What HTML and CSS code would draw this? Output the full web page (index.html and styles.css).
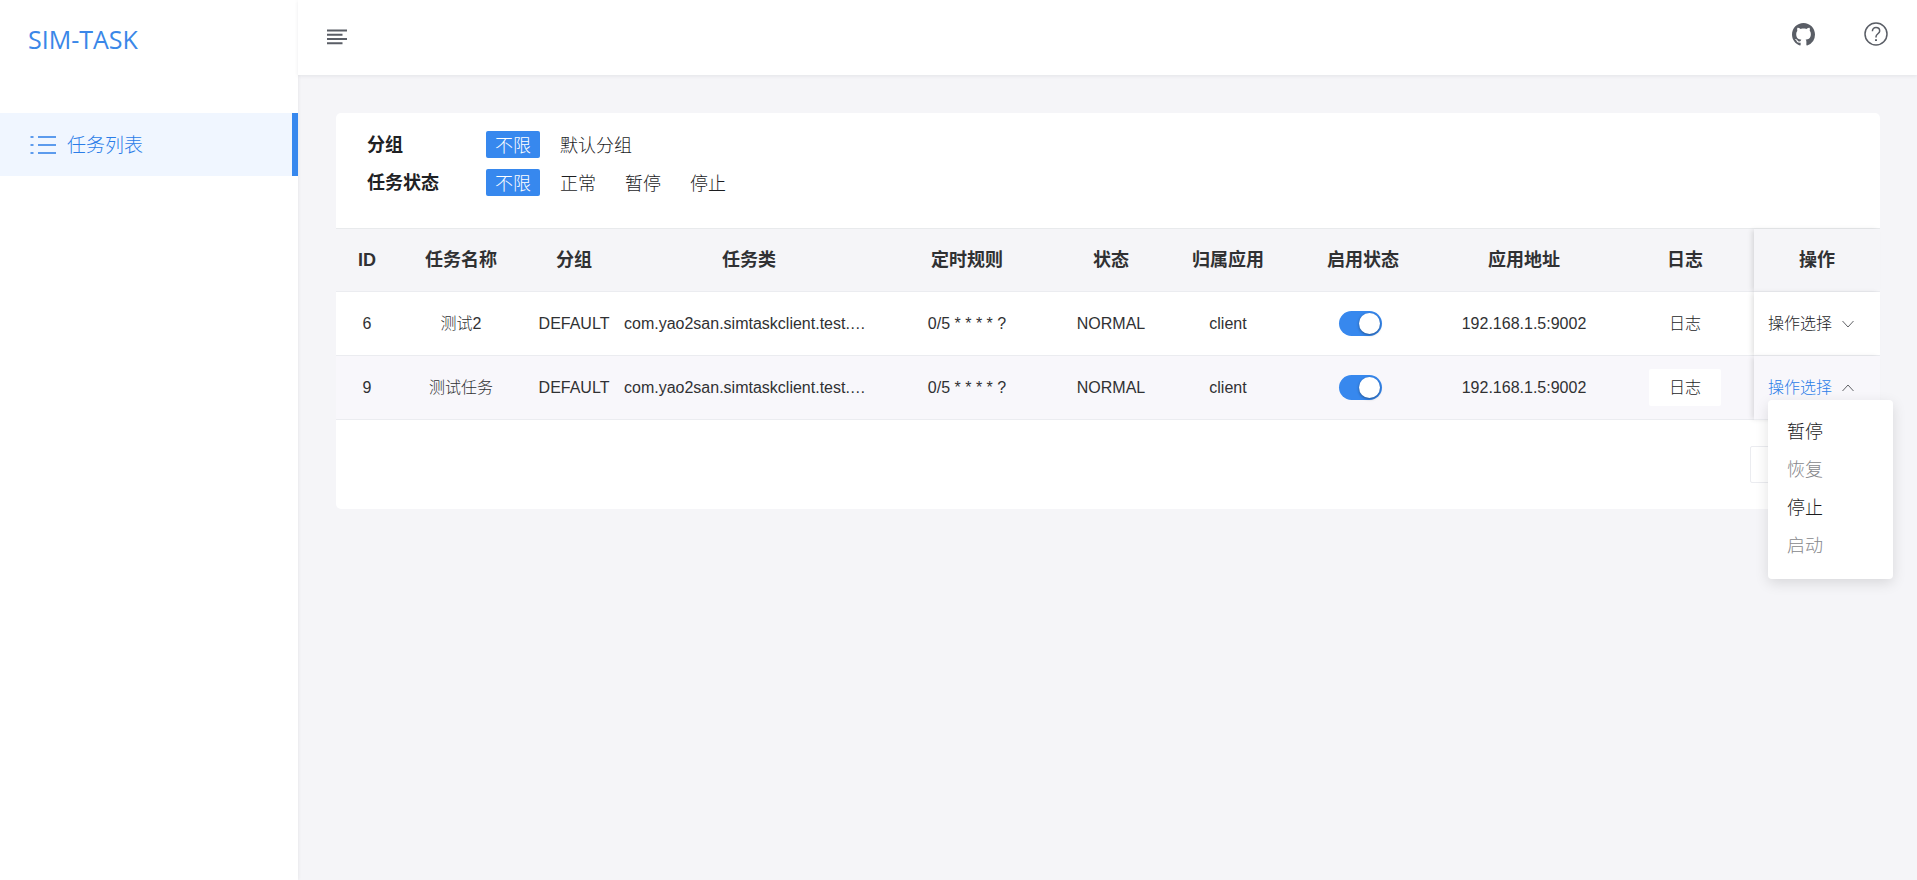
FILE: index.html
```html
<!DOCTYPE html>
<html lang="zh-CN">
<head>
<meta charset="utf-8">
<title>SIM-TASK</title>
<link rel="stylesheet" href="styles.css">
</head>
<body>
<div class="layout">
  <aside class="sidebar">
    <div class="logo">SIM-TASK</div>
    <nav class="menu">
      <a class="menu-item" href="#tasks">
        <svg class="menu-icon" viewBox="0 0 26 18" aria-hidden="true"><path d="M0.500 1H3.500M8 1H26M0.500 9H3.500M8 9H26M0.500 17H3.500M8 17H26"/></svg>
        <span>任务列表</span>
      </a>
    </nav>
  </aside>
  <div class="main">
    <header class="topbar">
      <button class="icon-button" type="button" aria-label="收起菜单">
        <svg class="fold-icon" viewBox="0 0 22 16" aria-hidden="true"><path d="M1 1.500H21M1 5.800H16.500M1 10H21M1 14.300H16.500"/></svg>
      </button>
      <div class="topbar-links">
        <a class="icon-button" href="#github" aria-label="GitHub">
          <svg class="github-icon" viewBox="0 0 16 16" aria-hidden="true"><path d="M8 0C3.580 0 0 3.580 0 8c0 3.540 2.290 6.530 5.470 7.590.4.070.55-.17.55-.38 0-.19-.01-.82-.01-1.490-2.010.37-2.530-.49-2.690-.94-.09-.23-.48-.94-.82-1.130-.28-.15-.68-.52-.01-.53.63-.01 1.080.58 1.230.82.72 1.210 1.870.87 2.330.66.07-.52.28-.87.51-1.070-1.780-.2-3.640-.89-3.640-3.950 0-.87.31-1.590.82-2.150-.08-.2-.36-1.020.08-2.120 0 0 .67-.21 2.200.82.64-.18 1.320-.27 2-.27s1.360.09 2 .27c1.530-1.040 2.200-.82 2.200-.82.44 1.100.16 1.920.08 2.120.51.56.82 1.270.82 2.150 0 3.070-1.870 3.750-3.650 3.950.29.25.54.73.54 1.480 0 1.070-.01 1.930-.01 2.200 0 .21.15.46.55.38A8.010 8.010 0 0 0 16 8c0-4.420-3.580-8-8-8z"/></svg>
        </a>
        <a class="icon-button" href="#help" aria-label="帮助">
          <svg class="help-icon" viewBox="0 0 24 24" aria-hidden="true"><circle cx="12" cy="12" r="11"/><path d="M8.400 9.200C8.400 7 9.900 5.600 12 5.600s3.700 1.400 3.700 3.400c0 2.600-3.700 2.900-3.700 5.700v.7"/><path class="dot" d="M12 17.300v1.600"/></svg>
        </a>
      </div>
    </header>
    <main class="content">
      <section class="card">
        <div class="filters">
          <div class="filter-row">
            <span class="filter-label">分组</span>
            <button class="pill pill-active" type="button">不限</button>
            <button class="pill" type="button">默认分组</button>
          </div>
          <div class="filter-row">
            <span class="filter-label">任务状态</span>
            <button class="pill pill-active" type="button">不限</button>
            <button class="pill" type="button">正常</button>
            <button class="pill" type="button">暂停</button>
            <button class="pill" type="button">停止</button>
          </div>
        </div>
        <table class="tasks">
          <colgroup>
            <col class="c-id"><col class="c-name"><col class="c-group"><col class="c-class"><col class="c-cron"><col class="c-status"><col class="c-app"><col class="c-enable"><col class="c-addr"><col class="c-log"><col class="c-op">
          </colgroup>
          <thead>
            <tr><th>ID</th><th>任务名称</th><th>分组</th><th>任务类</th><th>定时规则</th><th>状态</th><th>归属应用</th><th>启用状态</th><th>应用地址</th><th>日志</th><th class="fixed">操作</th></tr>
          </thead>
          <tbody>
            <tr>
              <td>6</td><td>测试2</td><td>DEFAULT</td><td class="clip">com.yao2san.simtaskclient.test.…</td><td>0/5 * * * * ?</td><td>NORMAL</td><td>client</td>
              <td class="switch-cell"><input class="switch" type="checkbox" aria-label="启用测试2" checked></td>
              <td>192.168.1.5:9002</td>
              <td><button class="log" type="button">日志</button></td>
              <td class="fixed"><div class="dropdown"><button class="trigger" type="button">操作选择<svg class="chevron" viewBox="0 0 12 8" aria-hidden="true"><path d="M0.500 1L6 7L11.500 1"/></svg></button></div></td>
            </tr>
            <tr class="hover">
              <td>9</td><td>测试任务</td><td>DEFAULT</td><td class="clip">com.yao2san.simtaskclient.test.…</td><td>0/5 * * * * ?</td><td>NORMAL</td><td>client</td>
              <td class="switch-cell"><input class="switch" type="checkbox" aria-label="启用测试任务" checked></td>
              <td>192.168.1.5:9002</td>
              <td><button class="log" type="button">日志</button></td>
              <td class="fixed"><div class="dropdown"><button class="trigger trigger-open" type="button" aria-expanded="true">操作选择<svg class="chevron" viewBox="0 0 12 8" aria-hidden="true"><path d="M0.500 7L6 1L11.500 7"/></svg></button>
                <div class="dropdown-menu">
                  <button class="option" type="button">暂停</button>
                  <button class="option" type="button" disabled>恢复</button>
                  <button class="option" type="button">停止</button>
                  <button class="option" type="button" disabled>启动</button>
                </div></div></td>
            </tr>
          </tbody>
        </table>
        <nav class="pager" aria-label="分页">
          <button class="page-button" type="button" aria-label="上一页"></button>
        </nav>
      </section>
    </main>
  </div>
</div>
</body>
</html>
```
FILE: styles.css
```css
* { box-sizing: border-box; }
body {
  margin: 0;
  font-family: "Liberation Sans", "Noto Sans CJK SC", sans-serif;
  font-size: 16px;
  line-height: 24px;
  color: #303133;
  background: #f5f5f8;
}
button {
  font: inherit;
  color: inherit;
  background: none;
  border: 0;
  padding: 0;
}
a { text-decoration: none; color: inherit; }
svg { display: block; fill: none; stroke: currentColor; }

.layout { display: flex; min-height: 100vh; }
.sidebar {
  flex: 0 0 298px;
  background: #fff;
  box-shadow: 0 0 4px rgba(0, 0, 0, 0.08);
}
.logo {
  height: 113px;
  padding: 22px 28px;
  font-family: "Open Sans", "Noto Sans", sans-serif;
  font-size: 25px;
  line-height: 34px;
  color: #3a87e8;
}
.menu-item {
  display: flex;
  align-items: center;
  gap: 11px;
  height: 63px;
  padding-left: 30px;
  border-right: 6px solid #3788ee;
  background: #f0f6ff;
  color: #2b7de8;
  font-size: 19px;
  font-weight: 300;
}
.menu-item span { padding-top: 2px; }
.menu-icon { width: 26px; height: 18px; stroke-width: 1.5; }

.main { flex: 1; min-width: 0; }
.topbar {
  display: flex;
  justify-content: space-between;
  height: 75px;
  padding: 22px 29px 0 28px;
  background: #fff;
  box-shadow: 0 1px 4px rgba(0, 21, 41, 0.08);
  color: #5a5e66;
}
.icon-button { display: flex; align-items: center; height: 24px; }
.fold-icon { width: 22px; height: 16px; stroke-width: 2; margin-top: 5px; }
.topbar-links { display: flex; gap: 49px; }
.github-icon { width: 23px; height: 23px; fill: currentColor; stroke: none; }
.help-icon { width: 24px; height: 24px; stroke-width: 1.5; }
.dot { stroke-width: 2; }

.content { padding: 38px 37px 38px 38px; }
.card { background: #fff; border-radius: 5px; }
.filters {
  display: flex;
  flex-direction: column;
  gap: 11px;
  padding: 18px 31px 32px;
  font-size: 18px;
}
.filter-row { display: flex; align-items: center; gap: 11px; height: 27px; }
.filter-label { width: 108px; font-weight: 700; color: #202124; }
.pill {
  height: 27px;
  padding: 3px 9px 0;
  border-radius: 2px;
  font-weight: 300;
  color: #1c1d1f;
}
.pill-active { background: #3788ee; color: #fff; }

.tasks {
  width: 100%;
  table-layout: fixed;
  border-collapse: separate;
  border-spacing: 0;
  border-top: 1px solid #e8eaec;
  text-align: center;
}
.c-id { width: 62px; }
.c-name { width: 126px; }
.c-group { width: 100px; }
.c-class { width: 250px; }
.c-cron { width: 186px; }
.c-status { width: 102px; }
.c-app { width: 132px; }
.c-enable { width: 138px; }
.c-addr { width: 184px; }
.c-log { width: 138px; }
.c-op { width: 126px; }
.tasks th, .tasks td {
  height: 64px;
  padding: 0;
  border-bottom: 1px solid #ebecf0;
  white-space: nowrap;
}
.tasks th {
  height: 63px;
  background: #f5f5f8;
  font-size: 18px;
}
.tasks td { font-weight: 300; }
.tasks .clip { overflow: hidden; text-overflow: ellipsis; text-align: left; }
.tasks .switch-cell { padding-right: 6px; }
.hover td { background: #f8f7fb; }
.tasks .fixed { box-shadow: -3px 0 5px -1px rgba(0, 0, 0, 0.12); }
.tasks td.fixed { background: #fff; padding-left: 14px; text-align: left; }
.tasks .hover td.fixed { background: #f8f7fb; }

.switch {
  appearance: none;
  display: block;
  width: 43px;
  height: 25px;
  margin: 0 auto;
  padding: 2px;
  border-radius: 13px;
  background: #3788ee;
}
.switch::before {
  content: "";
  display: block;
  width: 21px;
  height: 21px;
  margin-left: auto;
  border-radius: 50%;
  background: #fff;
  box-shadow: 0 1px 3px rgba(0, 0, 0, 0.4);
}
.log {
  width: 72px;
  height: 37px;
  background: #fff;
  border-radius: 2px;
  font-weight: 300;
  color: #1c1d1f;
}
.dropdown { position: relative; }
.trigger { display: flex; align-items: center; gap: 10px; height: 24px; padding-top: 1px; font-weight: 300; color: #1c1d1f; }
.trigger-open { color: #2b7de8; }
.chevron { width: 12px; height: 8px; stroke: #606266; }
.dropdown-menu {
  position: absolute;
  top: 100%;
  left: 0;
  z-index: 2;
  width: 125px;
  padding: 13px 0 14px;
  border-radius: 4px;
  background: #fff;
  box-shadow: 0 4px 14px rgba(0, 0, 0, 0.12);
}
.option {
  display: block;
  width: 100%;
  height: 38px;
  padding-left: 19px;
  font-size: 18px;
  font-weight: 300;
  text-align: left;
  color: #1c1d1f;
}
.option:disabled { color: #87888c; }

.pager {
  display: flex;
  justify-content: flex-end;
  padding: 26px 20px;
}
.page-button {
  width: 110px;
  height: 37px;
  border: 1px solid #ebecf0;
  border-radius: 2px;
}
```
